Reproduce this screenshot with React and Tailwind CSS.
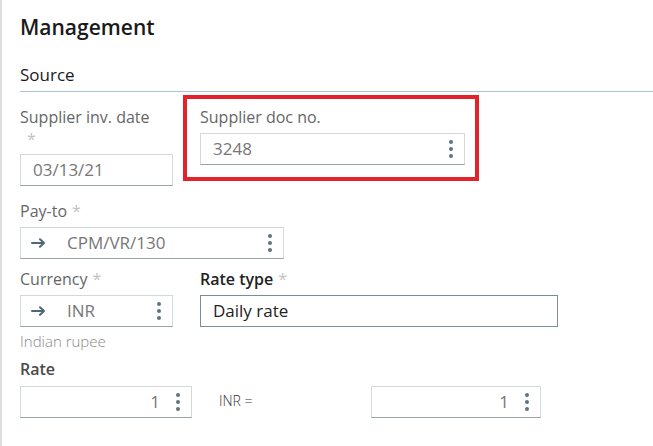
import React from 'react';

const Dots = () => (
  <span className="flex flex-col gap-[3px] shrink-0">
    <span className="w-[4px] h-[4px] rounded-full bg-[#5d7381]" />
    <span className="w-[4px] h-[4px] rounded-full bg-[#5d7381]" />
    <span className="w-[4px] h-[4px] rounded-full bg-[#5d7381]" />
  </span>
);

const Arrow = () => (
  <svg width="15" height="10" viewBox="0 0 15 10" fill="none" className="shrink-0">
    <path d="M1 5h12M9 1.2l4 3.8-4 3.8" stroke="#4f6878" strokeWidth="2" strokeLinecap="round" strokeLinejoin="round" />
  </svg>
);

const Label = ({ children, star, dark }) => (
  <div className={`text-[16px] leading-[22px] ${dark ? 'text-[#222] font-semibold' : 'text-[#666]'}`}>
    {children}
    {star && <span className="text-[#c2c2c2] font-normal ml-[5px]">*</span>}
  </div>
);

// plain input box with kebab menu on the right
const Field = ({ className = '', value, arrow, right }) => (
  <div className={`h-[32px] flex items-center bg-white border border-[#d3d8db] border-b-[#98a2a7] ${className}`}>
    {arrow && (
      <span className="ml-[10px] mr-[21px]">
        <Arrow />
      </span>
    )}
    <span className={`flex-1 text-[17px] text-[#777] ${arrow ? '' : 'pl-[12px]'} ${right ? 'text-right pr-[16px]' : ''}`}>
      {value}
    </span>
    <span className="mr-[11px]">
      <Dots />
    </span>
  </div>
);

export default function App() {
  return (
    <div className="w-[653px] h-[446px] bg-white border-l-2 border-[#dedede] font-['Open_Sans',sans-serif] overflow-hidden">
      <div className="pl-[18px]">
        <h1 className="pt-[12px] text-[21px] leading-[30px] font-semibold text-[#1a1a1a]">Management</h1>

        <div className="mt-[21px] pb-[4px] border-b border-[#a9c4cf]">
          <h2 className="text-[17px] leading-[24px] text-[#1a1a1a]">Source</h2>
        </div>

        {/* invoice date + doc no */}
        <div className="mt-[14px] flex">
          <div className="w-[153px]">
            <Label>Supplier inv. date</Label>
            <div className="text-[16px] leading-[22px] text-[#c2c2c2] pl-[7px]">*</div>
            <div className="mt-[4px] h-[32px] flex items-center border border-[#d3d8db] border-b-[#98a2a7] pl-[12px] text-[17px] text-[#777]">
              03/13/21
            </div>
          </div>
          <div className="relative ml-[27px] w-[265px]">
            <Label>Supplier doc no.</Label>
            <Field className="mt-[5px]" value="3248" />
            <div className="absolute left-[-17px] top-[-11px] w-[296px] h-[86px] border-4 border-[#e3222b]" />
          </div>
        </div>

        {/* pay-to */}
        <div className="mt-[14px] w-[264px]">
          <Label star>Pay-to</Label>
          <Field className="mt-[5px]" arrow value="CPM/VR/130" />
        </div>

        {/* currency + rate type */}
        <div className="mt-[9px] flex">
          <div className="w-[153px]">
            <Label star>Currency</Label>
            <Field className="mt-[5px]" arrow value="INR" />
          </div>
          <div className="ml-[27px] w-[358px]">
            <Label star dark>Rate type</Label>
            <div className="mt-[5px] h-[32px] flex items-center border border-[#7e8d94] pl-[12px] text-[17px] text-[#222]">
              Daily rate
            </div>
          </div>
        </div>

        <div className="mt-[4px] text-[15px] leading-[20px] font-light text-[#8a8a8a]">Indian rupee</div>

        <div className="mt-[7px] text-[16px] leading-[22px] font-semibold text-[#4a4a4a]">Rate</div>

        <div className="mt-[6px] flex items-center">
          <Field className="w-[172px]" value="1" right />
          <div className="ml-[27px] w-[152px] text-[14px] font-light text-[#333] -mt-[4px]">INR =</div>
          <Field className="w-[170px]" value="1" right />
        </div>
      </div>
    </div>
  );
}
